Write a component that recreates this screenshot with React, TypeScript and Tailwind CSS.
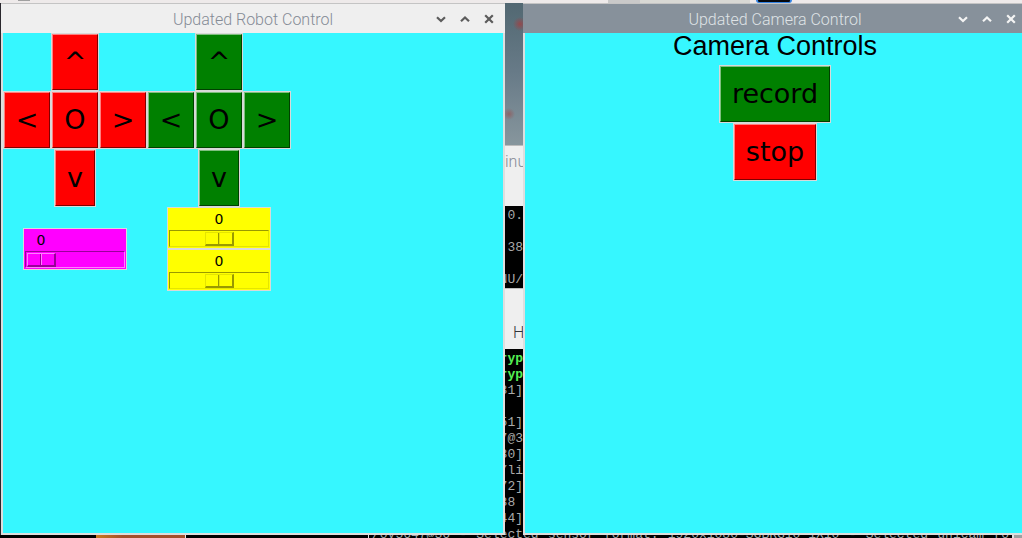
import { useState } from "react";
import type { ReactNode } from "react";

function WindowButton({ label, path }: { label: string; path: string }) {
  return (
    <button type="button" aria-label={label} className="flex h-6 w-6 items-center justify-center">
      <svg width="12" height="12" viewBox="0 0 12 12" fill="none" stroke="currentColor" strokeWidth="2.2">
        <path d={path} />
      </svg>
    </button>
  );
}

function AppWindow({ title, focused, children }: { title: string; focused: boolean; children: ReactNode }) {
  return (
    <section className="flex min-w-0 flex-col border-t border-t-[#c4c4c4]">
      <header
        className={
          focused
            ? "grid h-[29px] grid-cols-[76px_1fr_76px] items-center bg-[#87919b] text-[#dfe3e6]"
            : "grid h-[29px] grid-cols-[76px_1fr_76px] items-center bg-[#efefef] text-[#858b96]"
        }
      >
        <span />
        <h1 className="pt-0.5 text-center font-['Roboto'] text-[16px] leading-6 font-light whitespace-nowrap">{title}</h1>
        <div className={focused ? "flex justify-end pr-1 text-[#f4f4f4]" : "flex justify-end pr-1 text-[#5c5c5c]"}>
          <WindowButton label="Minimize" path="M2 4.2 L6 8 L10 4.2" />
          <WindowButton label="Maximize" path="M2 8.2 L6 4.4 L10 8.2" />
          <WindowButton label="Close" path="M2.2 2.2 L9.8 9.8 M9.8 2.2 L2.2 9.8" />
        </div>
      </header>
      <div className="min-h-0 flex-1 border-x-2 border-b-2 border-[#dedede] bg-[#36f7ff]">{children}</div>
    </section>
  );
}

const buttonColors = {
  red: "border-t-[#ff7f7f] border-l-[#ff7f7f] border-r-[#7f0000] border-b-[#7f0000] bg-[#ff0000]",
  green: "border-t-[#7fbf7f] border-l-[#7fbf7f] border-r-[#004000] border-b-[#004000] bg-[#008000]",
};

function TkButton({ color, label, name }: { color: "red" | "green"; label: string; name?: string }) {
  return (
    <div className="border border-[#d9d9d9]">
      <button
        type="button"
        aria-label={name}
        className={`block border px-[11px] py-3 font-['DejaVu_Sans'] text-[27px] leading-[30px] text-black ${buttonColors[color]}`}
      >
        {label}
      </button>
    </div>
  );
}

function DirectionPad({ color, name }: { color: "red" | "green"; name: string }) {
  return (
    <div className="grid grid-cols-[48px_48px_48px] justify-items-center">
      <span />
      <TkButton color={color} label="^" name={`${name} up`} />
      <span />
      <TkButton color={color} label="<" name={`${name} left`} />
      <TkButton color={color} label="O" name={`${name} center`} />
      <TkButton color={color} label=">" name={`${name} right`} />
      <span />
      <TkButton color={color} label="v" name={`${name} down`} />
      <span />
    </div>
  );
}

const scaleColors = {
  magenta: {
    box: "bg-[#ff00ff]",
    track:
      "border-t-[#990099] border-l-[#990099] border-r-[#ff7fff] border-b-[#ff7fff] [&::-webkit-slider-thumb]:border-t-[#ff7fff] [&::-webkit-slider-thumb]:border-l-[#ff7fff] [&::-webkit-slider-thumb]:border-r-[#990099] [&::-webkit-slider-thumb]:border-b-[#990099] [&::-webkit-slider-thumb]:bg-[linear-gradient(90deg,#ff00ff_12px,#990099_12px,#990099_13px,#ff7fff_13px,#ff7fff_14px,#ff00ff_14px)]",
  },
  yellow: {
    box: "bg-[#ffff00]",
    track:
      "border-t-[#999900] border-l-[#999900] border-r-[#e5e500] border-b-[#e5e500] [&::-webkit-slider-thumb]:border-t-[#e5e500] [&::-webkit-slider-thumb]:border-l-[#e5e500] [&::-webkit-slider-thumb]:border-r-[#999900] [&::-webkit-slider-thumb]:border-b-[#999900] [&::-webkit-slider-thumb]:bg-[linear-gradient(90deg,#ffff00_12px,#999900_12px,#999900_13px,#e5e500_13px,#e5e500_14px,#ffff00_14px)]",
  },
};

function Scale({ id, color, name, min, max }: { id: string; color: "magenta" | "yellow"; name: string; min: number; max: number }) {
  const [value, setValue] = useState(0);
  const offset = Math.round(((value - min) / (max - min)) * 68);
  return (
    <div className={`w-[104px] border border-[#d9d9d9] px-px pb-px ${scaleColors[color].box}`}>
      <label
        htmlFor={id}
        aria-label={name}
        className="block h-[22px] w-8 text-center font-['DejaVu_Sans'] text-[14px] leading-[22px] text-black"
        style={{ marginLeft: offset }}
      >
        {value}
      </label>
      <input
        id={id}
        type="range"
        min={min}
        max={max}
        value={value}
        onChange={(e) => setValue(Number(e.target.value))}
        className={`block h-[17px] w-full appearance-none border bg-transparent px-px [&::-webkit-slider-thumb]:h-[14px] [&::-webkit-slider-thumb]:w-[29px] [&::-webkit-slider-thumb]:appearance-none [&::-webkit-slider-thumb]:border [&::-webkit-slider-thumb]:border-r-2 [&::-webkit-slider-thumb]:border-b-2 ${scaleColors[color].track}`}
      />
    </div>
  );
}

function TerminalLine({ text, bold }: { text: string; bold?: boolean }) {
  return (
    <div
      className={
        bold
          ? "flex h-4 justify-end font-bold whitespace-pre text-[#54f054]"
          : "flex h-4 justify-end whitespace-pre text-[#a9a9a9]"
      }
    >
      {text}
    </div>
  );
}

const upperLines = ["0.", "", "38", "", "NU/"];
const lowerLines = ["31]", "", "51]", "7@3", "30]", "/li", "72]", "38 ", "44]", "ect"];

function BackgroundSliver() {
  return (
    <div className="flex min-h-0 min-w-0 flex-col overflow-hidden font-['Liberation_Mono'] text-[13px] leading-4">
      <div className="h-[142px] shrink-0 bg-[radial-gradient(circle_at_15px_21px,#94484c_0px,transparent_7px),radial-gradient(circle_at_4px_111px,#8d6467_0px,transparent_6px),linear-gradient(#526872,#687b88_50%,#87969d)]" />
      <div className="h-[61px] shrink-0 border-t border-[#bcbcbc] bg-[#efefef] pt-1 font-['Roboto'] text-[16px] leading-6 font-light whitespace-nowrap text-[#858b96]">
        inu
      </div>
      <div className="h-[82px] shrink-0 bg-black pt-0.5">
        {upperLines.map((line, i) => (
          <TerminalLine key={i} text={line} />
        ))}
      </div>
      <div className="h-[61px] shrink-0 border-t border-[#bcbcbc] bg-[#efefef] pt-8 pl-2 font-['Roboto'] text-[16px] leading-6 font-light text-[#30343a]">
        H
      </div>
      <div className="min-h-0 flex-1 bg-black pt-0.5">
        <TerminalLine text="ryp" bold />
        <TerminalLine text="ryp" bold />
        {lowerLines.map((line, i) => (
          <TerminalLine key={i} text={line} />
        ))}
      </div>
    </div>
  );
}

const logWords = [
  "/ov5647@36",
  "-",
  "Selected",
  "sensor",
  "format:",
  "1920x1080-SGBRG10_1X10",
  "-",
  "Selected",
  "unicam",
  "fo",
];

export default function App() {
  return (
    <main className="flex h-screen flex-col overflow-hidden bg-[#29272d]">
      <div className="flex h-[3px] shrink-0 bg-[#eeeaea]">
        <span className="ml-[18px] h-px w-3 bg-[#a0a0a0]" />
        <span className="ml-[578px] w-8 bg-[#c9c9c9]" />
        <span className="w-[110px] bg-[#d8d8d4]" />
        <span className="ml-1.5 w-9 rounded-b-sm border-x-2 border-b border-[#3584e4] bg-[#05070c]" />
      </div>
      <div className="-mr-[5px] grid min-h-0 flex-1 grid-cols-[minmax(0,1fr)_18px_minmax(0,1fr)] grid-rows-[minmax(0,1fr)] pl-px">
        <AppWindow title="Updated Robot Control" focused={false}>
          <div className="flex">
            <div className="flex flex-col">
              <DirectionPad color="red" name="Drive" />
              <div className="flex flex-1 items-center justify-center">
                <Scale id="speed" color="magenta" name="Speed" min={0} max={100} />
              </div>
            </div>
            <div className="flex flex-col items-center">
              <DirectionPad color="green" name="Camera" />
              <Scale id="pan" color="yellow" name="Pan" min={-100} max={100} />
              <Scale id="tilt" color="yellow" name="Tilt" min={-100} max={100} />
            </div>
          </div>
        </AppWindow>
        <BackgroundSliver />
        <AppWindow title="Updated Camera Control" focused>
          <div className="flex flex-col items-center">
            <h2 className="h-8 pt-px font-['Liberation_Sans'] text-[27px] leading-6 text-black">Camera Controls</h2>
            <TkButton color="green" label="record" />
            <TkButton color="red" label="stop" />
          </div>
        </AppWindow>
      </div>
      <div className="flex h-[3px] shrink-0 overflow-hidden bg-black">
        <span className="ml-24 w-[89px] bg-[linear-gradient(90deg,#c87a20,#a4502c_30%)]" />
        <span className="w-px bg-[#e4e4e4]" />
        <span className="ml-[182px] w-px bg-[#e4e4e4]" />
        <p className="-mt-2 flex min-w-0 flex-1 justify-between px-[3px] font-['Liberation_Mono'] text-[13px] leading-4 whitespace-nowrap text-[#a9a9a9]">
          {logWords.map((word, i) => (
            <span key={i}>{word}</span>
          ))}
        </p>
        <span className="w-2.5 border-l-2 border-[#e4e4e4] bg-[#a0a0a0]" />
      </div>
    </main>
  );
}
